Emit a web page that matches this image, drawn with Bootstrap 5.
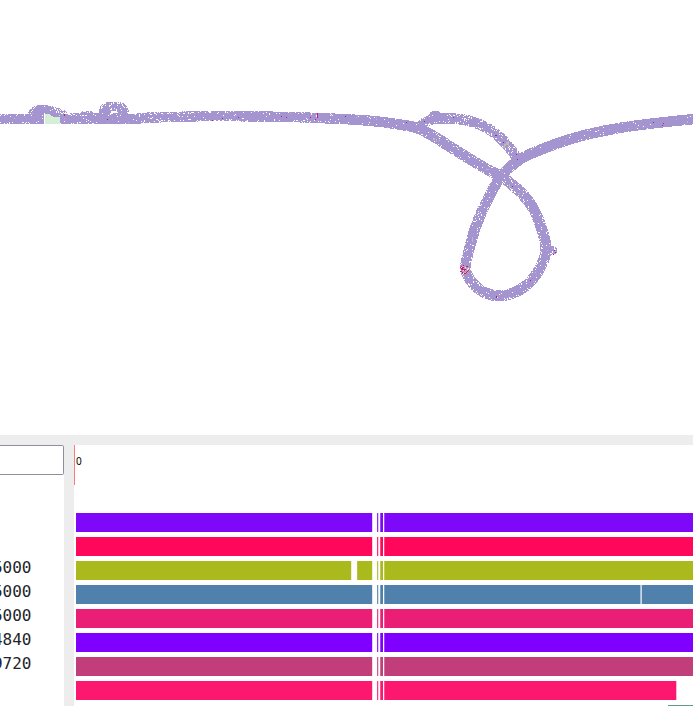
<!DOCTYPE html>
<html lang="en">
<head>
<meta charset="utf-8">
<title>Assembly graph viewer</title>
<meta name="viewport" content="width=device-width, initial-scale=1">
<link href="https://cdn.jsdelivr.net/npm/bootstrap@5.3.0/dist/css/bootstrap.min.css" rel="stylesheet">
<style>
.viewer{height:706px;background:#ededed}
.graph{height:435px}
.lower{height:261px;margin-top:10px}
.side{width:64px}
.search{height:30px;border:1px solid #8f8f9d;border-left:0;border-radius:0 2px 2px 0;width:64px;padding:0}
.names{margin-top:81px;width:31.5px;font:16px/24px "DejaVu Sans Mono",monospace;color:#212529}
.tracks{margin-left:10px}
.ruler{height:68px}
.cursor{width:1px;height:40px;background:#ff7b7b}
.tick{font:10px/12px "Noto Sans","DejaVu Sans",sans-serif;color:#000;margin:10px 0 0 1px}
.lane{height:19px;margin:0 0 5px 2px}
.lane svg,.stub svg{display:block}
.stub{height:1px}
</style>
<script src="https://cdn.jsdelivr.net/npm/bootstrap@5.3.0/dist/js/bootstrap.bundle.min.js"></script>
</head>
<body class="overflow-hidden">
<main class="viewer d-flex flex-column overflow-hidden">
  <section class="graph bg-white flex-shrink-0"><canvas id="graph" class="d-block" width="693" height="435"></canvas></section>
  <section class="lower d-flex flex-shrink-0">
    <aside class="side bg-white flex-shrink-0 overflow-hidden">
      <input class="search d-block bg-white" type="text" aria-label="Search">
      <div class="names d-flex flex-column align-items-end">
        <span>5000</span><span>5000</span><span>5000</span><span>4840</span><span>9720</span>
      </div>
    </aside>
    <div class="tracks bg-white flex-grow-1 overflow-hidden">
      <div class="ruler d-flex align-items-start"><div class="cursor"></div><div class="tick">0</div></div>
      <div id="lanes"></div>
    </div>
  </section>
</main>
<script>
const ctx = document.getElementById('graph').getContext('2d');
let seed = 4711;
const rnd = () => (seed = (seed * 16807) % 2147483647) / 2147483647;
const base = '#a495d0';
const dot = (x, y, c, w = 1, h = 1) => { ctx.fillStyle = c; ctx.fillRect(x, y, w, h); };

// Each point: x, y, half width, share of missing pixels in the middle, share at the edges
function ribbon(pts) {
  const P = (i) => pts[Math.max(0, Math.min(pts.length - 1, i))];
  const line = [];
  for (let i = 0; i < pts.length - 1; i++) {
    const a = P(i - 1), b = P(i), c = P(i + 1), d = P(i + 2);
    const n = 2 * Math.ceil(Math.hypot(c[0] - b[0], c[1] - b[1]));
    for (let k = 0; k < n; k++) {
      const t = k / n;
      line.push(b.map((v, j) => j < 2
        ? 0.5 * (2 * v + (c[j] - a[j]) * t + (2 * a[j] - 5 * v + 4 * c[j] - d[j]) * t * t + (3 * v - a[j] - 3 * c[j] + d[j]) * t * t * t)
        : v + (c[j] - v) * t));
    }
  }
  line.push(P(pts.length - 1));
  const best = new Map();
  for (const p of line) {
    const R = p[2] + .2, r = R + 1;
    for (let y = Math.floor(p[1] - r); y <= p[1] + r; y++)
      for (let x = Math.floor(p[0] - r); x <= p[0] + r; x++) {
        const q = Math.hypot(x + .5 - p[0], y + .5 - p[1]) / R;
        const key = y * 1000 + x;
        if (q <= 1 && (!best.has(key) || best.get(key)[0] > q)) best.set(key, [q, p[3], p[4]]);
      }
  }
  for (const [key, [q, mid, edge]] of best) {
    const miss = q > .55 ? edge * .85 : mid;
    if (rnd() < miss) continue;
    dot(key % 1000, Math.floor(key / 1000), rnd() < miss * .04 ? '#c2b9bd' : base);
  }
}
ribbon([[-5,118.7,5,.02,.24],[20,119,5.2,.02,.16],[45,119,5.2,.01,.1],[62,119,5.2,.03,.16],[85,118.7,5.2,.08,.26],[98,118.7,5.3,.01,.04],[135,118.9,5.2,.01,.07],[142,118,5.1,.06,.26],[170,117,5,.06,.26],[200,116.3,5,.02,.2],[215,116,5,.04,.26],[255,116.5,5,.02,.12],[290,117,5,.02,.16],[325,118.3,5,.03,.14],[350,119.4,5,.01,.06],[375,121.3,5.1,.01,.05],[400,124.6,5.1,.01,.04],[417,128,5.2,.01,.05],[433,136,5.4,.04,.18],[460,153,5.4,.04,.18],[485,168,5.3,.03,.16],[500,176,5.2,.03,.1],[513,185.5,5.5,.08,.22],[525,197,5.5,.03,.2],[534,210,5.3,.01,.14],[541,227,5.4,.03,.22],[546,248,5.3,.03,.18],[541,266,5.3,.03,.22],[529,283,5.3,.06,.26],[513,293,5.3,.03,.16],[497,295.8,5.3,.01,.12],[482,291,5.4,.04,.24],[471,281,5.4,.04,.28],[465.5,268,5,.04,.2],[469,250,5.2,.02,.14],[476,226,5.2,.04,.16],[486,203,5.2,.03,.14],[500,178,5.2,.01,.05],[519,160,5.2,.01,.03],[540,150,5.2,.02,.07],[573,138.3,5.1,.02,.05],[607,130.2,5.1,.02,.05],[640,125,5,.01,.03],[673,121.2,5,.01,.03],[698,118.7,5,.01,.03]]);
ribbon([[421,123,3,.1,.35],[429,120.5,5,.06,.25],[436,118,5.6,.01,.1],[445,118.4,5.2,.01,.12],[460,119.2,5.2,.08,.3],[473,122,5.2,.06,.28],[484,126.5,5.2,.06,.28],[496,134,5.2,.06,.28],[508,146,5.2,.1,.36],[517,158,4.8,.04,.2]]);
ribbon([[432,113.5,2.2,.2,.4],[437,114,3,.05,.3]]);
ribbon([[31,112,2.5,.3,.45],[37,109.5,4,.06,.25],[43,109.3,4.2,.04,.22],[50,110,4,.08,.28],[57,111.5,3.5,.15,.35],[64,113,2.5,.35,.5]]);
ribbon([[35,113,2,.1,.2],[44,113,2,.03,.15],[52,113,2,.05,.15]]);
ribbon([[101,111,2.5,.2,.4],[106,107.5,4.6,.12,.32],[113,106.5,4.6,.15,.35],[121,107.5,4.6,.1,.32],[126,111,2.5,.2,.4]]);
ribbon([[102,112,2.5,.02,.15],[108,112,2.8,.02,.15]]);
ribbon([[120,112,2.5,.05,.2],[126,113,2,.05,.2]]);
ribbon([[83,113,1.5,.3,.5],[91,113,1.5,.3,.5]]);
ribbon([[550,250,4.5,.03,.14],[553,250.5,4,.06,.25]]);

// Unplaced contig patch beside the first bulge
dot(44, 113, '#ffffff', 1, 11);
dot(45, 114, '#d5efd4', 15, 10);
[[50,114,10,1],[51,115,8,1],[53,116,5,1],[57,116,3,1]].forEach(r => dot(r[0], r[1], base, r[2], r[3]));
dot(45, 113, base, 15, 1);

// Opening under the second bulge
dot(111, 112, '#ffffff', 7, 1);
dot(110, 113, '#ffffff', 3, 1);

const marks = {
  '#d0108a': [[64,114,1,2],[222,118],[238,117],[286,117],[310,117],[317,113,1,5],[315,119],[406,122],[424,121],[453,117],[495,135,2,1],[516,154],[517,159],[512,186],[530,280],[496,296,1,2],[554,250],[553,254],[555,252],[662,125],[663,123],[461,266],[463,269],[465,270],[462,273]],
  '#96208d': [[107,119],[212,120],[281,116],[345,116],[503,142],[653,122]],
  '#ee9a91': [[64,118],[107,122],[112,119],[180,118],[228,113],[246,120],[419,131],[502,172],[549,246],[468,270]],
  '#f0b090': [[128,122],[121,113],[418,123],[14,118]],
  '#bfb9b5': [[433,138,2,2],[436,139,1,3],[439,140],[508,141,1,5],[506,142,2,3],[504,144,2,2],[503,146,2,2],[502,147,2,1],[509,184,1,4],[518,193,2,1],[472,237,1,5],[559,139],[565,140],[609,129],[628,128],[676,119],[687,121,1,2],[486,169,3,1]],
  '#8fc7c8': [[134,114],[475,292],[552,248],[421,118]]
};
for (const c in marks) marks[c].forEach(([x, y, w = 1, h = 1]) => dot(x, y, c, w, h));

// Densely mixed cluster at the left turn of the loop
const mix = ['#d0108a','#d0108a','#c7b5b1','#e9d6c1','#bfb9b5','#d51f75','#9f3036','#ee9a91'];
for (let y = 264; y < 274; y++) for (let x = 460; x < 470; x++)
  if (Math.hypot(x - 464, y - 269) < 5 && rnd() < .75) dot(x, y, mix[Math.floor(rnd() * mix.length)]);

// Coverage lanes; x is measured from the lane's left edge
const colours = ['#7d09f8','#ff075a','#aab91c','#4f81ac','#eb1e75','#8000ff','#c23e7b','#fc176f'];
const lanes = document.getElementById('lanes');
colours.forEach((c, i) => {
  const end = i === 7 ? 600 : 617;
  const r = (x, w, o = 1) => `<rect x="${x}" width="${w}" height="19" fill="${c}" fill-opacity="${o}"/>`;
  let s = i === 2 ? r(0,275) + r(275,1,.2) + r(281,1,.85) + r(282,14) : r(0,296);
  s += r(296,1,.2) + r(301,1,.85) + r(302,1,.22) + r(304,1,.75) + r(305,2) + r(308,1,.75);
  s += i === 3 ? r(309,255) + r(564,1,.5) + r(565,1,.3) + r(566,51) : r(309,end-309);
  if (i === 7) s += r(600,1,.3);
  lanes.insertAdjacentHTML('beforeend', `<div class="lane"><svg width="617" height="19" shape-rendering="crispEdges">${s}</svg></div>`);
});
lanes.insertAdjacentHTML('beforeend', '<div class="stub"><svg width="619" height="1"><rect x="594" width="25" height="1" fill="#5e9c80"/></svg></div>');
</script>
</body>
</html>
